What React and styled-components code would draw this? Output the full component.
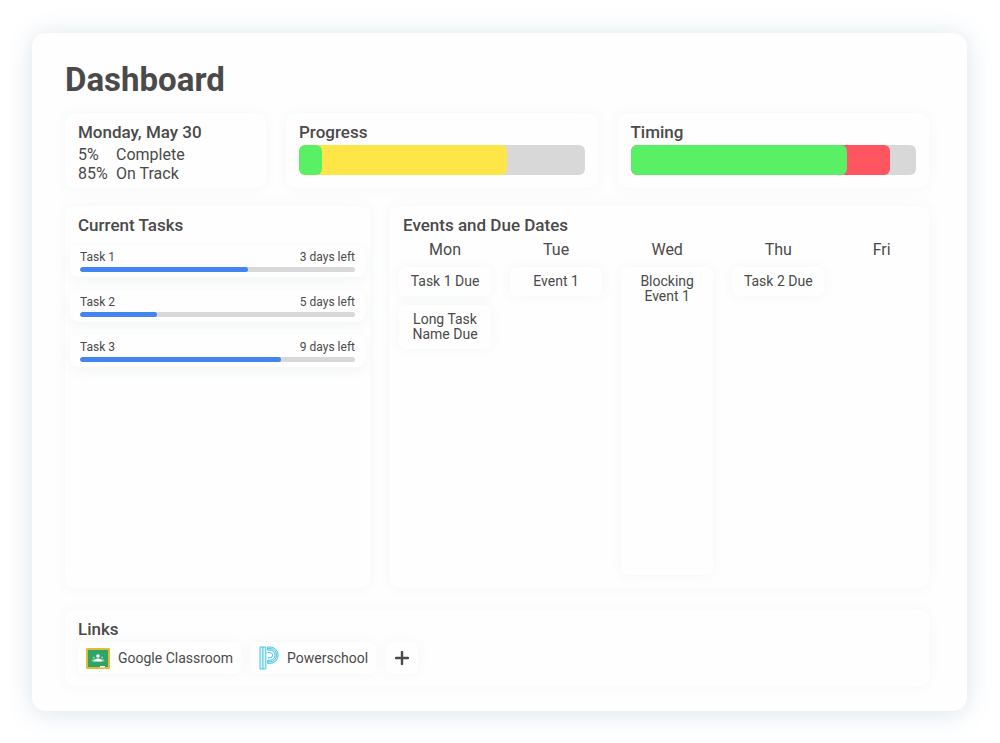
import React from "react";
import styled, { createGlobalStyle } from "styled-components";

const GlobalStyle = createGlobalStyle`
    * {
        box-sizing: border-box;
    }
    body {
        margin: 0;
        background: #fff;
        color: #4a4a4a;
        font-family: Roboto, "Liberation Sans", sans-serif;
        font-size: 16px;
    }
    ul, dl, dd, h1, h2, h3 {
        margin: 0;
        padding: 0;
        list-style: none;
    }
`;

const Page = styled.div`
    display: flex;
    min-height: 100vh;
    padding: 33px 33px 32px 32px;
`;

const Frame = styled.main`
    flex: 1;
    display: flex;
    flex-direction: column;
    min-width: 0;
    padding: 27px 38px 25px 33px;
    border-radius: 14px;
    background: #fefefe;
    box-shadow: 0 2px 26px rgba(60, 120, 160, 0.2);
`;

const PageTitle = styled.h1`
    margin-bottom: 13px;
    font-size: 33px;
    font-weight: 700;
    line-height: 40px;
`;

const Card = styled.section`
    padding: 9px 13px 5px;
    border-radius: 10px;
    background: #fefefe;
    box-shadow: 0 0 14px rgba(60, 100, 100, 0.05);
`;

const CardTitle = styled.h2`
    font-size: 17px;
    font-weight: 500;
    line-height: 20px;
`;

const SummaryRow = styled.div`
    display: grid;
    grid-template-columns: 201px 1fr 1fr;
    gap: 20px;
`;

const Stats = styled.dl`
    display: grid;
    grid-template-columns: 38px 1fr;
    margin-top: 3px;
    line-height: 19px;
`;

const Meter = styled.div`
    position: relative;
    height: 30px;
    margin-top: 3px;
    border-radius: 6px;
    background: #d8d8d8;
    overflow: hidden;
`;

const MeterFill = styled.div`
    position: absolute;
    top: 0;
    left: 0;
    height: 100%;
    border-radius: 6px;
    background: ${(props) => props.$color};
`;

const MainRow = styled.div`
    flex: 1;
    display: grid;
    grid-template-columns: 305px 1fr;
    gap: 20px;
    margin: 18px 0 22px;
`;

const TaskList = styled.ul`
    display: flex;
    flex-direction: column;
    gap: 13px;
    margin: 10px -8px 0;
`;

const TaskItem = styled.li`
    padding: 4px 10px 5px;
    border-radius: 8px;
    background: #fefefe;
    box-shadow: 0 4px 12px rgba(60, 100, 130, 0.06);
`;

const TaskLabel = styled.div`
    display: flex;
    justify-content: space-between;
    font-size: 12px;
    line-height: 16px;
`;

const TaskBar = styled.div`
    height: 5px;
    margin-top: 2px;
    border-radius: 3px;
    background: #d8d8d8;
    overflow: hidden;
`;

const TaskBarFill = styled.div`
    height: 100%;
    border-radius: 3px;
    background: #4285f0;
`;

const EventsCard = styled(Card)`
    display: flex;
    flex-direction: column;
    padding: 9px 9px 13px;

    ${CardTitle} {
        padding-left: 4px;
    }
`;

const Week = styled.div`
    flex: 1;
    display: grid;
    grid-template-columns: repeat(4, 6fr) 5fr;
    gap: 19px;
    margin-top: 5px;
`;

const Day = styled.section`
    display: flex;
    flex-direction: column;
    text-align: center;
`;

const DayName = styled.h3`
    margin-bottom: 7px;
    font-size: 16px;
    font-weight: 400;
    line-height: 20px;
`;

const EventList = styled.ul`
    flex: 1;
    display: flex;
    flex-direction: column;
    gap: 9px;
`;

const EventItem = styled.li`
    flex: ${(props) => (props.$blocking ? 1 : "none")};
    padding: 7px 10px;
    border-radius: 6px;
    background: #fefefe;
    box-shadow: 0 0 12px rgba(60, 100, 100, 0.06);
    font-size: 14px;
    line-height: 15px;
`;

const LinkRow = styled.nav`
    display: flex;
    gap: 10px;
    margin: 3px 0 7px;
`;

const LinkChip = styled.a`
    display: flex;
    align-items: center;
    gap: 8px;
    height: 32px;
    padding: 0 8px;
    border-radius: 6px;
    background: #fefefe;
    box-shadow: 0 0 12px rgba(60, 100, 100, 0.06);
    color: inherit;
    font-size: 14px;
    text-decoration: none;
`;

const AddButton = styled.button`
    display: flex;
    align-items: center;
    justify-content: center;
    width: 32px;
    height: 32px;
    padding: 0;
    border: 0;
    border-radius: 6px;
    background: #fefefe;
    box-shadow: 0 0 12px rgba(60, 100, 100, 0.06);
    color: inherit;
`;

const tasks = [
    { name: "Task 1", left: "3 days left", done: 61 },
    { name: "Task 2", left: "5 days left", done: 28 },
    { name: "Task 3", left: "9 days left", done: 73 },
];

const days = [
    { name: "Mon", events: [{ title: "Task 1 Due" }, { title: "Long Task Name Due" }] },
    { name: "Tue", events: [{ title: "Event 1" }] },
    { name: "Wed", events: [{ title: "Blocking Event 1", blocking: true }] },
    { name: "Thu", events: [{ title: "Task 2 Due" }] },
    { name: "Fri", events: [] },
];

function ClassroomIcon() {
    return (
        <svg width="24" height="21" viewBox="0 0 24 21" aria-hidden="true">
            <rect width="24" height="21" rx="1.5" fill="#e0bb35" />
            <rect x="2" y="2" width="20" height="17" fill="#2fa565" />
            <circle cx="12" cy="8" r="1.8" fill="#fff" />
            <circle cx="7.8" cy="9.6" r="1.1" fill="#8fd0ae" />
            <circle cx="16.2" cy="9.6" r="1.1" fill="#8fd0ae" />
            <path d="M5.5 13.4c0-1.6 1.4-2.1 3-2.1h7c1.6 0 3 .5 3 2.1z" fill="#8fd0ae" />
            <path d="M8 13.4c0-2 1.9-2.9 4-2.9s4 .9 4 2.9z" fill="#fff" />
            <rect x="14" y="18" width="5" height="1.4" fill="#fff" />
        </svg>
    );
}

function PowerschoolIcon() {
    return (
        <svg
            width="20"
            height="24"
            viewBox="0 0 20 24"
            fill="none"
            stroke="#4cc6e4"
            strokeWidth="1"
            aria-hidden="true"
        >
            <path d="M1 1h5.8v22H1z" fill="#d9f4fa" />
            <path d="M3.9 1v22" />
            <path d="M8.6 1H11a8.2 8.2 0 0 1 0 16.4H8.6v-3.2H11a5 5 0 0 0 0-10H8.6z" fill="#d9f4fa" />
            <path d="M8.6 2.6H11a6.6 6.6 0 0 1 0 13.2H8.6M8.6 6.6H11a2.6 2.6 0 0 1 0 5.2H8.6" />
        </svg>
    );
}

function PlusIcon() {
    return (
        <svg width="14" height="14" viewBox="0 0 14 14" aria-hidden="true">
            <path d="M7 1v12M1 7h12" stroke="currentColor" strokeWidth="2.4" strokeLinecap="round" />
        </svg>
    );
}

// fills overlap, the first one is drawn on top
function MeterCard({ title, fills }) {
    return (
        <Card>
            <CardTitle>{title}</CardTitle>
            <Meter role="img" aria-label={title}>
                {[...fills].reverse().map((fill) => (
                    <MeterFill
                        key={fill.color}
                        $color={fill.color}
                        style={{ width: `${fill.value}%` }}
                    />
                ))}
            </Meter>
        </Card>
    );
}

function Task({ task }) {
    return (
        <TaskItem>
            <TaskLabel>
                <span>{task.name}</span>
                <span>{task.left}</span>
            </TaskLabel>
            <TaskBar
                role="progressbar"
                aria-label={task.name}
                aria-valuenow={task.done}
                aria-valuemin={0}
                aria-valuemax={100}
            >
                <TaskBarFill style={{ width: `${task.done}%` }} />
            </TaskBar>
        </TaskItem>
    );
}

function App() {
    return (
        <>
            <GlobalStyle />
            <Page>
                <Frame>
                    <PageTitle>Dashboard</PageTitle>

                    <SummaryRow>
                        <Card>
                            <CardTitle>Monday, May 30</CardTitle>
                            <Stats>
                                <dt>5%</dt>
                                <dd>Complete</dd>
                                <dt>85%</dt>
                                <dd>On Track</dd>
                            </Stats>
                        </Card>
                        <MeterCard
                            title="Progress"
                            fills={[
                                { color: "#5af066", value: 8 },
                                { color: "#ffe548", value: 73 },
                            ]}
                        />
                        <MeterCard
                            title="Timing"
                            fills={[
                                { color: "#5af066", value: 76 },
                                { color: "#ff5560", value: 91 },
                            ]}
                        />
                    </SummaryRow>

                    <MainRow>
                        <Card>
                            <CardTitle>Current Tasks</CardTitle>
                            <TaskList>
                                {tasks.map((task) => (
                                    <Task key={task.name} task={task} />
                                ))}
                            </TaskList>
                        </Card>
                        <EventsCard>
                            <CardTitle>Events and Due Dates</CardTitle>
                            <Week>
                                {days.map((day) => (
                                    <Day key={day.name}>
                                        <DayName>{day.name}</DayName>
                                        <EventList>
                                            {day.events.map((event) => (
                                                <EventItem
                                                    key={event.title}
                                                    $blocking={event.blocking}
                                                >
                                                    {event.title}
                                                </EventItem>
                                            ))}
                                        </EventList>
                                    </Day>
                                ))}
                            </Week>
                        </EventsCard>
                    </MainRow>

                    <Card>
                        <CardTitle>Links</CardTitle>
                        <LinkRow>
                            <LinkChip href="#classroom">
                                <ClassroomIcon />
                                Google Classroom
                            </LinkChip>
                            <LinkChip href="#powerschool">
                                <PowerschoolIcon />
                                Powerschool
                            </LinkChip>
                            <AddButton type="button" aria-label="Add link">
                                <PlusIcon />
                            </AddButton>
                        </LinkRow>
                    </Card>
                </Frame>
            </Page>
        </>
    );
}

export default App;
